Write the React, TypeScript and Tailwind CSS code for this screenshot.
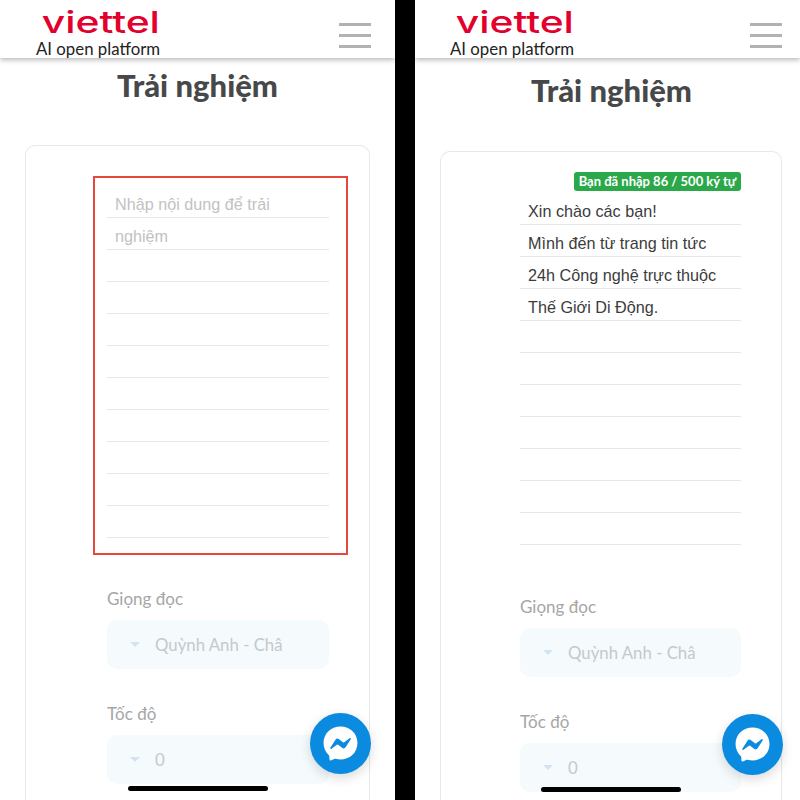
import { FaFacebookMessenger } from 'react-icons/fa';

const lato = "font-['Lato','Noto_Sans',sans-serif]";

function Header({ pad }: { pad: string }) {
  return (
    <header className={`relative z-10 flex h-[58px] items-start justify-between bg-white shadow-[0_2px_5px_rgba(0,0,0,0.28)] ${pad}`}>
      <div className="flex flex-col items-end pt-[7px]">
        <span className="origin-right scale-x-[1.36] font-['Inter',sans-serif] text-[30px] leading-[30px] font-medium text-[#e2002d]">viettel</span>
        <span className={`${lato} mt-[3px] text-[16.8px] leading-[18px] text-[#222]`}>AI open platform</span>
      </div>
      <div className="mt-[23px] flex w-[32px] flex-col gap-[8px]">
        <span className="h-[3px] bg-[#b2b2b2]" />
        <span className="h-[3px] bg-[#b2b2b2]" />
        <span className="h-[3px] bg-[#b2b2b2]" />
      </div>
    </header>
  );
}

function Select({ label, value }: { label: string; value: string }) {
  return (
    <div>
      <div className={`${lato} text-[17px] leading-[24px] text-[#a6a6a6]`}>{label}</div>
      <div className="mt-[9px] flex h-[49px] items-center rounded-[10px] bg-[#f5fafd] pl-[23px]">
        <span className="h-0 w-0 border-x-[5px] border-t-[5px] border-x-transparent border-t-[#d3e4f0]" />
        <span className={`${lato} ml-[15px] text-[16.8px] text-[#c4c9cd]`}>{value}</span>
      </div>
    </div>
  );
}

function Rows({ lines, muted }: { lines: string[]; muted?: boolean }) {
  const rows = Array.from({ length: 11 }, (_, i) => lines[i] ?? '');
  return (
    <div>
      {rows.map((t, i) => (
        <div
          key={i}
          className={`h-[32px] border-b border-[#e6e6e6] pt-[6px] pl-[8px] font-['Liberation_Sans',sans-serif] text-[16.2px] leading-[25px] ${muted ? 'text-[#c2c2c2]' : 'text-[#3c3c3c]'}`}
        >
          {t}
        </div>
      ))}
    </div>
  );
}

function Fab({ pos }: { pos: string }) {
  return (
    <div className={`absolute z-20 flex h-[61px] w-[61px] items-center justify-center rounded-full bg-[#0a8be0] shadow-[0_4px_12px_rgba(0,0,0,0.15)] ${pos}`}>
      <FaFacebookMessenger className="text-[35px] text-white" />
    </div>
  );
}

export default function App() {
  return (
    <div className="flex h-[800px] w-[800px] overflow-hidden bg-black">
      {/* left phone */}
      <section className="relative flex h-full w-[395px] flex-col overflow-hidden bg-white">
        <Header pad="pl-[36px] pr-[24px]" />
        <h1 className={`${lato} mt-[8px] text-center text-[31px] leading-[38px] font-black text-[#47484a]`}>Trải nghiệm</h1>
        <div className="mx-[25px] mt-[41px] flex-1 rounded-t-[10px] border border-b-0 border-[#e8e8e8] pt-[30px] pr-[21px] pl-[67px]">
          <div className="h-[379px] border-2 border-[#e5493d] pt-[8px] pr-[17px] pl-[12px]">
            <Rows lines={['Nhập nội dung để trải', 'nghiệm']} muted />
          </div>
          <div className="mt-[32px] flex flex-col gap-[33px] pr-[19px] pl-[14px]">
            <Select label="Giọng đọc" value="Quỳnh Anh - Châ" />
            <Select label="Tốc độ" value="0" />
          </div>
        </div>
        <Fab pos="left-[310px] top-[713px]" />
        <span className="absolute top-[786px] left-[128px] z-30 h-[5px] w-[140px] rounded-full bg-black" />
      </section>

      <div className="w-[20px] shrink-0 bg-black" />

      {/* right phone */}
      <section className="relative flex h-full flex-1 flex-col overflow-hidden bg-white">
        <Header pad="pl-[35px] pr-[18px]" />
        <h1 className={`${lato} mt-[13px] pl-[8px] text-center text-[31px] leading-[38px] font-black text-[#47484a]`}>Trải nghiệm</h1>
        <div className="relative mt-[42px] mr-[18px] ml-[25px] flex-1 rounded-t-[10px] border border-b-0 border-[#e8e8e8] pt-[41px] pr-[40px] pl-[79px]">
          <span className={`${lato} absolute top-[20px] right-[40px] flex h-[19px] w-[167px] items-center justify-center rounded-[3px] bg-[#2aa84a] text-[13px] font-bold text-white`}>
            Bạn đã nhập 86 / 500 ký tự
          </span>
          <Rows lines={['Xin chào các bạn!', 'Mình đến từ trang tin tức', '24h Công nghệ trực thuộc', 'Thế Giới Di Động.']} />
          <div className="mt-[50px] flex flex-col gap-[33px]">
            <Select label="Giọng đọc" value="Quỳnh Anh - Châ" />
            <Select label="Tốc độ" value="0" />
          </div>
        </div>
        <Fab pos="left-[307px] top-[714px]" />
        <span className="absolute top-[787px] left-[126px] z-30 h-[5px] w-[140px] rounded-full bg-black" />
      </section>
    </div>
  );
}
